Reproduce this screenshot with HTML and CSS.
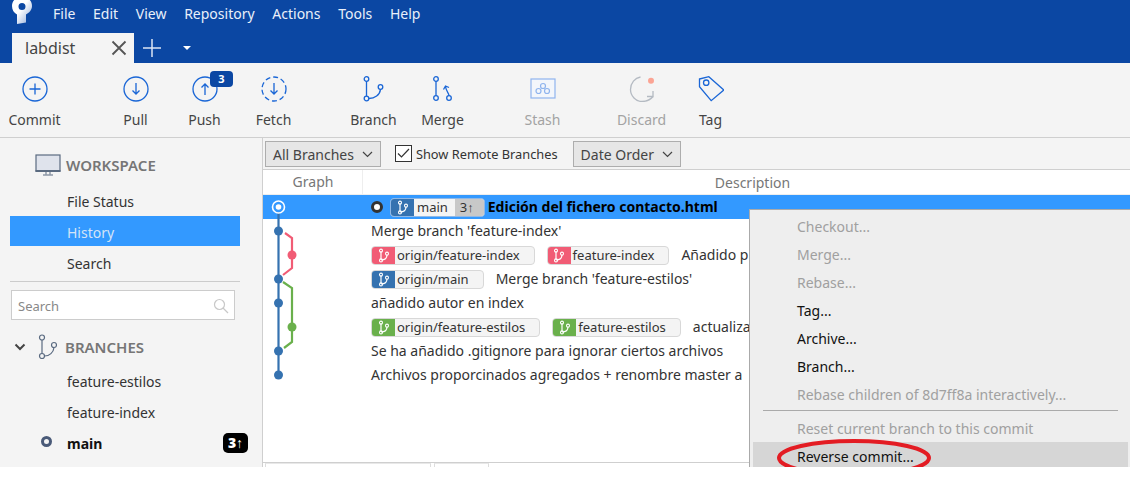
FILE: index.html
```html
<!DOCTYPE html>
<html lang="en">
<head>
    <meta charset="UTF-8">
    <meta name="viewport" content="width=device-width, initial-scale=1.0">
    <title>labdist</title>
    <link rel="stylesheet" href="styles.css">
</head>
<body>
    <svg class="icon-defs" width="0" height="0">
        <symbol id="branch-mini" viewBox="0 0 16 20">
            <path d="M4 4v12M4 16c5 0 8-3 8-7" fill="none" stroke="#fff" stroke-width="1.6"/>
            <circle cx="4" cy="3.5" r="2" fill="none" stroke="#fff" stroke-width="1.4"/>
            <circle cx="4" cy="16.5" r="2" fill="none" stroke="#fff" stroke-width="1.4"/>
            <circle cx="12" cy="7.5" r="2" fill="none" stroke="#fff" stroke-width="1.4"/>
        </symbol>
    </svg>
    <div class="app">
        <header class="titlebar">
            <div class="menu-row">
                <svg class="logo" width="22" height="26" viewBox="0 0 22 26">
                    <defs>
                        <linearGradient id="logoGrad" x1="0" y1="0" x2="1" y2="1">
                            <stop offset="0.45" stop-color="#fff"/>
                            <stop offset="1" stop-color="#8aa6d6"/>
                        </linearGradient>
                    </defs>
                    <path d="M10 -3C3.500 -3 0 1 0 6c0 4 2 7 5 8.500V24l9-1.500v-8c3-1.500 6-4.500 6-8.500 0-5-3.500-9-10-9zm0 6a3.500 3.500 0 1 1 0 7 3.500 3.500 0 0 1 0-7z" fill="url(#logoGrad)" fill-rule="evenodd"/>
                </svg>
                <nav class="menu">
                    <span>File</span><span>Edit</span><span>View</span><span>Repository</span><span>Actions</span><span>Tools</span><span>Help</span>
                </nav>
            </div>
            <div class="tab-row">
                <div class="tab">
                    <span>labdist</span>
                    <svg width="16" height="16" viewBox="0 0 16 16"><path d="M1.500 1.500l13 13M14.500 1.500l-13 13" stroke="#555" stroke-width="1.800"/></svg>
                </div>
                <svg class="tab-add" width="20" height="20" viewBox="0 0 20 20"><path d="M10 1v18M1 10h18" stroke="#dbe5f5" stroke-width="1.500"/></svg>
                <span class="tab-more"></span>
            </div>
        </header>

        <div class="toolbar">
            <div class="tool-group group-commit">
                <div class="tool">
                    <svg width="26" height="26" viewBox="0 0 26 26"><circle cx="13" cy="13" r="12" fill="none" stroke="#1a66d6" stroke-width="1.300"/><path d="M13 7.500v11M7.500 13h11" stroke="#1a66d6" stroke-width="1.300"/></svg>
                    <span>Commit</span>
                </div>
            </div>
            <div class="tool-group group-sync">
                <div class="tool">
                    <svg width="26" height="26" viewBox="0 0 26 26"><circle cx="13" cy="13" r="12" fill="none" stroke="#1a66d6" stroke-width="1.300"/><path d="M13 7v11M9.500 14.500l3.500 3.500 3.500-3.500" fill="none" stroke="#1a66d6" stroke-width="1.300"/></svg>
                    <span>Pull</span>
                </div>
                <div class="tool">
                    <svg width="26" height="26" viewBox="0 0 26 26"><circle cx="13" cy="13" r="12" fill="none" stroke="#1a66d6" stroke-width="1.300"/><path d="M13 19V8M9.500 11.500L13 8l3.500 3.500" fill="none" stroke="#1a66d6" stroke-width="1.300"/></svg>
                    <span>Push</span>
                    <b class="push-badge">3</b>
                </div>
                <div class="tool">
                    <svg width="26" height="26" viewBox="0 0 26 26"><circle cx="13" cy="13" r="12" fill="none" stroke="#1a66d6" stroke-width="1.300" stroke-dasharray="5 2.900"/><path d="M13 7v11M9.500 14.500l3.500 3.500 3.500-3.500" fill="none" stroke="#1a66d6" stroke-width="1.300"/></svg>
                    <span>Fetch</span>
                </div>
            </div>
            <div class="tool-group group-sync">
                <div class="tool">
                    <svg width="26" height="26" viewBox="0 0 26 26"><g fill="none" stroke="#1a66d6" stroke-width="1.300"><circle cx="5.500" cy="3" r="2.300"/><circle cx="5.500" cy="22.500" r="2.300"/><circle cx="19.500" cy="11" r="2.300"/><path d="M5.500 5.300v14.900M7.800 22.500c6 0 11-3.500 11.700-9.200"/></g></svg>
                    <span>Branch</span>
                </div>
                <div class="tool">
                    <svg width="26" height="26" viewBox="0 0 26 26"><g fill="none" stroke="#1a66d6" stroke-width="1.300"><circle cx="6" cy="3" r="2.300"/><circle cx="6" cy="22" r="2.300"/><circle cx="19" cy="22" r="2.300"/><path d="M6 5.300v14.400M19 19.700c0-3-3-4-3.500-9.500M13.500 13.500L15.500 10l3.500 1.500"/></g></svg>
                    <span>Merge</span>
                </div>
            </div>
            <div class="tool-group">
                <div class="tool is-off">
                    <svg width="26" height="22" viewBox="0 0 26 22"><g fill="none" stroke="#8fb4ee" stroke-width="1.200"><rect x="1" y="1" width="24" height="19" fill="#f3f6fb"/><circle cx="13" cy="8" r="2.500"/><circle cx="8.500" cy="13" r="2.500"/><circle cx="17" cy="13" r="2.500"/></g></svg>
                    <span>Stash</span>
                </div>
            </div>
            <div class="tool-group">
                <div class="tool is-off">
                    <svg width="26" height="26" viewBox="0 0 26 26"><path d="M11.500 1C6 2 1.500 7 1.500 13.500S7 25.500 13 25.500c4.500 0 8.500-2 11-5" fill="none" stroke="#b4bac2" stroke-width="1.300"/><path d="M18 20.500h6V15" fill="none" stroke="#b4bac2" stroke-width="1.300"/><circle cx="22" cy="4.700" r="3" fill="#fba494"/></svg>
                    <span>Discard</span>
                </div>
                <div class="tool">
                    <svg width="26" height="26" viewBox="0 0 26 26"><path d="M1.500 3L10.800 0.700 25.800 14 13.200 24.700 1.500 10.700z" fill="none" stroke="#1a66d6" stroke-width="1.300"/><circle cx="8.200" cy="6.700" r="2.700" fill="none" stroke="#1a66d6" stroke-width="1.300"/></svg>
                    <span>Tag</span>
                </div>
            </div>
        </div>

        <div class="main">
            <aside class="sidebar">
                <div class="side-head">
                    <svg width="26" height="22" viewBox="0 0 26 22"><rect x="1" y="1" width="24" height="16" fill="#dfe3ec" stroke="#5a6a80" stroke-width="1.200"/><path d="M0.500 17h25" stroke="#5a6a80" stroke-width="2"/><path d="M11 18v2.500M15 18v2.500M8 21h10" stroke="#5a6a80" stroke-width="1"/></svg>
                    <span>WORKSPACE</span>
                </div>
                <ul class="side-list">
                    <li>File Status</li>
                    <li class="active">History</li>
                    <li>Search</li>
                </ul>
                <div class="side-sep"></div>
                <div class="side-search">
                    <span>Search</span>
                    <svg width="16" height="16" viewBox="0 0 16 16"><circle cx="6.500" cy="6.500" r="5" fill="none" stroke="#c8c8c8" stroke-width="1.200"/><path d="M10 10l5 5" stroke="#c8c8c8" stroke-width="1.200"/></svg>
                </div>
                <div class="branch-head">
                    <svg class="chevron" width="12" height="8" viewBox="0 0 12 8"><path d="M1.500 1.500L6 6l4.500-4.500" fill="none" stroke="#444" stroke-width="2"/></svg>
                    <svg width="20" height="26" viewBox="0 0 20 26"><g fill="none" stroke="#5a6a80" stroke-width="1.200"><circle cx="5" cy="3.500" r="2.500"/><circle cx="5" cy="22" r="2.500"/><circle cx="17" cy="11" r="2.500"/><path d="M5 6v13.500M7.500 22c5 0 9-3.500 9.500-8.500"/></g></svg>
                    <span>BRANCHES</span>
                </div>
                <ul class="side-list branches">
                    <li>feature-estilos</li>
                    <li>feature-index</li>
                    <li class="current"><i class="dot"></i>main<b class="ahead">3↑</b></li>
                </ul>
            </aside>

            <section class="content">
                <div class="filters">
                    <div class="select">All Branches<svg width="11" height="7" viewBox="0 0 11 7"><path d="M1 1l4.500 4.500L10 1" fill="none" stroke="#444" stroke-width="1.200"/></svg></div>
                    <label class="check">
                        <svg width="17" height="17" viewBox="0 0 17 17"><rect x="0.500" y="0.500" width="16" height="16" fill="#fff" stroke="#333"/><path d="M3 8.500l3.500 3.500L14 4" fill="none" stroke="#333" stroke-width="1.200"/></svg>
                        Show Remote Branches
                    </label>
                    <div class="select">Date Order<svg width="11" height="7" viewBox="0 0 11 7"><path d="M1 1l4.500 4.500L10 1" fill="none" stroke="#444" stroke-width="1.200"/></svg></div>
                </div>
                <div class="list-head">
                    <div class="col-graph">Graph</div>
                    <div class="col-desc">Description</div>
                </div>
                <div class="list">
                    <svg class="graph" width="100" height="192" viewBox="0 0 100 192">
                        <g fill="none" stroke-width="2.200">
                            <path d="M15.500 12v168" stroke="#3572b0"/>
                            <path d="M22 38l7 5v30l-9 7" stroke="#f15c75"/>
                            <path d="M20 87l9 6v54l-8 6" stroke="#6ab04c"/>
                        </g>
                        <circle cx="15.500" cy="12" r="6" fill="#3399ff" stroke="#fff" stroke-width="1.600"/>
                        <circle cx="15.500" cy="12" r="2.800" fill="#fff"/>
                        <circle cx="15.500" cy="36" r="4.500" fill="#3572b0"/>
                        <circle cx="29" cy="60" r="4.500" fill="#f15c75"/>
                        <circle cx="15.500" cy="84" r="4.500" fill="#3572b0"/>
                        <circle cx="15.500" cy="108" r="4.500" fill="#3572b0"/>
                        <circle cx="29" cy="132" r="4.500" fill="#6ab04c"/>
                        <circle cx="15.500" cy="156" r="4.500" fill="#3572b0"/>
                        <circle cx="15.500" cy="180" r="4.500" fill="#3572b0"/>
                    </svg>
                    <div class="rows">
                        <div class="row selected">
                            <i class="head-dot"></i>
                            <span class="ref ref-blue"><i><svg width="12" height="15"><use href="#branch-mini"/></svg></i><span class="ref-name">main</span><span class="ref-count">3↑</span></span>
                            <b>Edición del fichero contacto.html</b>
                        </div>
                        <div class="row">Merge branch 'feature-index'</div>
                        <div class="row">
                            <span class="ref ref-pink"><i><svg width="12" height="15"><use href="#branch-mini"/></svg></i><span>origin/feature-index</span></span>
                            <span class="ref ref-pink"><i><svg width="12" height="15"><use href="#branch-mini"/></svg></i><span>feature-index</span></span>
                            <span class="msg">Añadido p</span>
                        </div>
                        <div class="row">
                            <span class="ref ref-blue"><i><svg width="12" height="15"><use href="#branch-mini"/></svg></i><span>origin/main</span></span>
                            <span class="msg">Merge branch 'feature-estilos'</span>
                        </div>
                        <div class="row">añadido autor en index</div>
                        <div class="row">
                            <span class="ref ref-green"><i><svg width="12" height="15"><use href="#branch-mini"/></svg></i><span>origin/feature-estilos</span></span>
                            <span class="ref ref-green"><i><svg width="12" height="15"><use href="#branch-mini"/></svg></i><span>feature-estilos</span></span>
                            <span class="msg">actualiza</span>
                        </div>
                        <div class="row">Se ha añadido .gitignore para ignorar ciertos archivos</div>
                        <div class="row">Archivos proporcinados agregados + renombre master a</div>
                    </div>
                </div>
                <div class="list-foot"><span class="foot-a"></span><span class="foot-b"></span></div>
            </section>
        </div>

        <div class="context-menu">
            <div class="item off">Checkout...</div>
            <div class="item off">Merge...</div>
            <div class="item off">Rebase...</div>
            <div class="item">Tag...</div>
            <div class="item">Archive...</div>
            <div class="item">Branch...</div>
            <div class="item off">Rebase children of 8d7ff8a interactively...</div>
            <div class="sep"></div>
            <div class="item off">Reset current branch to this commit</div>
            <div class="item hover">Reverse commit...</div>
        </div>
        <svg class="red-ring" width="160" height="42" viewBox="0 0 160 42"><ellipse cx="80" cy="21" rx="75" ry="17" fill="none" stroke="#e31c23" stroke-width="4"/></svg>
    </div>
</body>
</html>
```

FILE: styles.css
```css
* {
    box-sizing: border-box;
}
body {
    margin: 0;
    background: #fff;
    font-family: "Noto Sans", "Open Sans", sans-serif;
    font-size: 14px;
    color: #333;
    overflow: hidden;
}
.icon-defs {
    position: absolute;
}
.app {
    position: relative;
    width: 1130px;
    height: 467px;
    display: flex;
    flex-direction: column;
}

/* title bar */
.titlebar {
    height: 63px;
    background: #0b47a3;
    padding-left: 12px;
}
.menu-row {
    height: 33px;
    display: flex;
    align-items: flex-start;
}
.logo {
    display: block;
    margin-right: 19px;
}
.menu {
    display: flex;
    gap: 17.700px;
    height: 27px;
    align-items: center;
    color: #e9f0fa;
}
.tab-row {
    height: 30px;
    display: flex;
    align-items: center;
}
.tab {
    width: 122px;
    height: 30px;
    background: #f4f4f4;
    display: flex;
    align-items: center;
    justify-content: space-between;
    padding: 0 7px 0 13px;
    font-size: 16px;
    color: #444;
}
.tab-add {
    margin-left: 8px;
}
.tab-more {
    margin-left: 21px;
    border: 4.500px solid transparent;
    border-top-color: #fff;
    border-bottom: 0;
}

/* toolbar */
.toolbar {
    height: 75px;
    background: #f4f4f4;
    border-bottom: 1px solid #cfcfcf;
    display: flex;
}
.tool-group {
    display: flex;
    margin-right: 30px;
}
.group-sync {
    margin-right: 31px;
}
.group-commit {
    margin-right: 32px;
}
.tool {
    position: relative;
    width: 69px;
    display: flex;
    flex-direction: column;
    align-items: center;
    padding-top: 13px;
    color: #444;
}
.tool svg {
    height: 26px;
}
.tool span {
    margin-top: 8px;
    line-height: 20px;
}
.tool.is-off span {
    color: #a3a3a3;
}
.tool .push-badge {
    position: absolute;
    top: 8px;
    left: 40px;
    width: 23px;
    height: 16px;
    border-radius: 4px;
    background: #0b47a3;
    color: #fff;
    font-size: 11px;
    line-height: 15px;
    text-align: center;
}

/* sidebar */
.main {
    flex: 1;
    display: flex;
    min-height: 0;
}
.sidebar {
    width: 262px;
    background: #f4f4f4;
    padding-left: 10px;
}
.side-head {
    display: flex;
    align-items: center;
    gap: 5px;
    height: 47px;
    padding-left: 25px;
    padding-top: 6px;
    color: #767676;
    font-size: 15px;
    font-weight: 600;
}
.side-list {
    list-style: none;
    margin: 0;
    padding: 0;
    width: 230px;
}
.side-list li {
    display: flex;
    align-items: center;
    height: 30px;
    margin-bottom: 1px;
    padding: 2px 0 0 57px;
}
.side-list li.active {
    background: #3399ff;
    color: #d3e4f7;
}
.side-sep {
    width: 230px;
    height: 1px;
    margin-top: 4px;
    background: #ccc;
}
.side-search {
    width: 224px;
    height: 30px;
    margin: 8px 0 0 1px;
    background: #fff;
    border: 1px solid #ccc;
    display: flex;
    align-items: center;
    justify-content: space-between;
    padding: 2px 5px 0 6px;
    color: #888;
    font-size: 13px;
}
.branch-head {
    display: flex;
    align-items: center;
    height: 37px;
    margin-top: 8px;
    padding-left: 4px;
    color: #767676;
    font-size: 15px;
    font-weight: 600;
}
.chevron {
    margin-right: 11px;
}
.branch-head span {
    margin-left: 8px;
}
.branches {
    width: 238px;
}
.branches li.current {
    font-weight: 700;
    color: #111;
    position: relative;
}
.dot {
    position: absolute;
    left: 31px;
    top: 9px;
    width: 11px;
    height: 11px;
    border: 3px solid #4a5a78;
    border-radius: 50%;
}
.ahead {
    margin-left: auto;
    width: 25px;
    height: 20px;
    background: #000;
    color: #fff;
    border-radius: 5px;
    line-height: 20px;
    text-align: center;
    font-size: 14px;
}

/* commit list */
.content {
    flex: 1;
    display: flex;
    flex-direction: column;
    min-width: 0;
    border-left: 1px solid #cfcfcf;
}
.filters {
    height: 32px;
    background: #f4f4f4;
    border-bottom: 1px solid #cfcfcf;
    display: flex;
    align-items: center;
    padding-left: 2px;
}
.select {
    height: 26px;
    background: #e6e6e6;
    border: 1px solid #adadad;
    display: flex;
    align-items: center;
    gap: 8px;
    padding: 1px 7px 0;
    color: #444;
}
.check {
    display: flex;
    align-items: center;
    gap: 4px;
    margin: 0 15px 0 14px;
    font-size: 12.800px;
}
.list-head {
    height: 25px;
    display: flex;
    color: #777;
    border-bottom: 1px solid #eee;
    align-items: center;
}
.col-graph {
    width: 100px;
    padding-left: 1px;
    text-align: center;
    line-height: 24px;
    border-right: 1px solid #eee;
}
.col-desc {
    flex: 1;
    text-align: center;
    padding-left: 12px;
}
.list {
    flex: 1;
    position: relative;
    min-height: 0;
}
.graph {
    position: absolute;
    left: 0;
    top: 0;
    z-index: 1;
}
.row {
    height: 24px;
    display: flex;
    align-items: center;
    padding: 0 0 1px 108px;
    white-space: nowrap;
}
.row.selected {
    background: #3399ff;
    color: #000;
}
.head-dot {
    width: 12px;
    height: 12px;
    margin-right: 7px;
    border-radius: 50%;
    background: #fff;
    border: 3px solid #333;
}
.ref {
    display: flex;
    align-items: stretch;
    height: 19px;
    margin-top: 1px;
    margin-right: 12px;
    border: 1px solid #d8d8d8;
    border-radius: 4px;
    background: #f4f4f4;
    font-size: 13px;
    line-height: 17px;
    overflow: hidden;
    color: #333;
}
.ref i {
    width: 23px;
    display: flex;
    align-items: center;
    justify-content: center;
}
.ref span {
    padding: 0 14px 0 2px;
}
.ref-blue i {
    background: #3572b0;
}
.ref-pink i {
    background: #f15c75;
}
.ref-green i {
    background: #6ab04c;
}
.row .ref .ref-name {
    padding: 0 7px 0 3px;
}
.row .ref .ref-count {
    background: #c8c8c8;
    padding: 0 10px 0 5px;
}
.row.selected .ref {
    border-color: #8fb8e6;
    margin-right: 3px;
}
.list-foot {
    height: 5px;
    border-top: 1px solid #cfcfcf;
    display: flex;
    padding-left: 2px;
    gap: 3px;
}
.foot-a, .foot-b {
    height: 4px;
    border-top: 1px solid #e8e8e8;
    border-left: 1px solid #ddd;
    border-right: 1px solid #ddd;
}
.foot-a {
    width: 166px;
}
.foot-b {
    width: 55px;
}

/* right click menu */
.context-menu {
    position: absolute;
    left: 749px;
    top: 209px;
    width: 381px;
    height: 258px;
    background: #eee;
    border: 1px solid #aaa;
    border-right: 0;
    border-bottom: 0;
    padding: 3px 2px 0 3px;
    color: #111;
    z-index: 2;
}
.item {
    height: 28px;
    padding-left: 44px;
    line-height: 27px;
}
.item.off {
    color: #a0a0a0;
}
.sep + .item {
    height: 27px;
}
.item.hover {
    background: #d6d6d6;
    height: 25px;
    line-height: 29px;
}
.sep {
    height: 1px;
    margin: 1px 10px 4px;
    background: #aaa;
}
.red-ring {
    position: absolute;
    left: 774px;
    top: 437px;
    z-index: 3;
}
```
